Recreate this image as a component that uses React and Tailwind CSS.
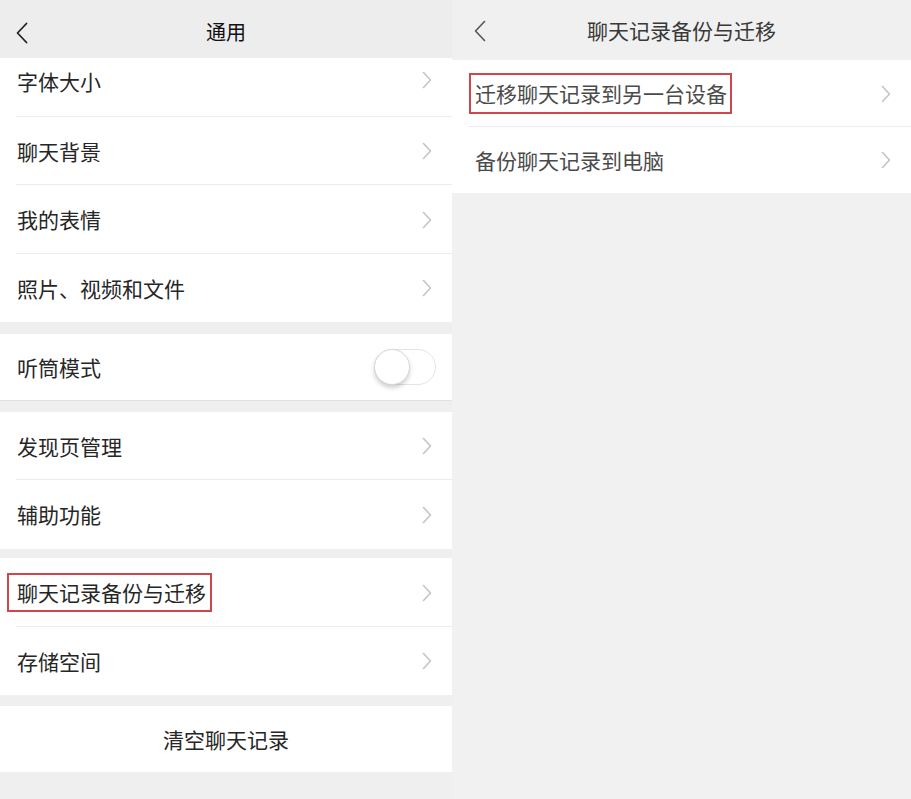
import React from "react";

const font = { fontFamily: '"Noto Sans CJK SC", "Noto Sans", sans-serif' };

function Chevron({ className = "" }) {
  return (
    <svg width="10" height="18" viewBox="0 0 10 18" className={className}>
      <path d="M1.5 1.5 L8.5 9 L1.5 16.5" fill="none" stroke="#c4c4c8" strokeWidth="1.6" strokeLinecap="round" strokeLinejoin="round" />
    </svg>
  );
}

function Back() {
  return (
    <svg width="14" height="22" viewBox="0 0 14 22">
      <path d="M11.5 1.5 L2.5 11 L11.5 20.5" fill="none" stroke="#222" strokeWidth="1.8" strokeLinecap="round" strokeLinejoin="round" />
    </svg>
  );
}

function Row({ children, h = "h-[68px]", divider = true, extra = "" }) {
  return (
    <div className={`relative flex ${h} items-center bg-white pl-[17px] pr-[20px] ${extra}`}>
      <div className="flex-1 text-[21px] leading-none text-[#262626]">{children}</div>
      <Chevron />
      {divider && <div className="absolute bottom-0 left-[16px] right-0 h-px bg-[#ececec]" />}
    </div>
  );
}

export default function App() {
  return (
    <div className="flex h-[799px] w-[911px] overflow-hidden" style={font}>
      {/* Left panel */}
      <div className="flex w-[452px] flex-col bg-[#efefef]">
        <div className="relative flex h-[58px] items-center justify-center bg-[#ededed] pt-[6px]">
          <div className="absolute left-[15px] top-[22px]"><Back /></div>
          <div className="text-[20px] leading-none text-[#111]">通用</div>
        </div>
        <Row h="h-[59px]" extra="items-start pt-[13px]">字体大小</Row>
        <Row>聊天背景</Row>
        <Row h="h-[69px]">我的表情</Row>
        <Row divider={false}>照片、视频和文件</Row>
        <div className="h-[12px]" />
        <div className="flex h-[67px] items-center bg-white pl-[17px] pr-[16px] border-b border-[#e2e2e2]">
          <div className="flex-1 text-[21px] leading-none text-[#262626]">听筒模式</div>
          <div className="relative h-[36px] w-[62px] rounded-full border border-[#e4e4e4] bg-white">
            <div className="absolute left-[-1px] top-[-1px] h-[36px] w-[36px] rounded-full border border-[#d8d8d8] bg-white shadow-[0_3px_4px_rgba(0,0,0,0.18)]" />
          </div>
        </div>
        <div className="h-[11px]" />
        <Row>发现页管理</Row>
        <Row h="h-[69px]" divider={false}>辅助功能</Row>
        <div className="h-[9px]" />
        <div className="relative flex h-[69px] items-center bg-white pl-[17px] pr-[20px]">
          <div className="flex-1">
            <span className="-ml-[10px] inline-block border-2 border-[#d0464a] py-[7px] pl-[8px] pr-[4px] text-[21px] leading-none text-[#262626]">
              聊天记录备份与迁移
            </span>
          </div>
          <Chevron />
          <div className="absolute bottom-0 left-[16px] right-0 h-px bg-[#ececec]" />
        </div>
        <Row divider={false}>存储空间</Row>
        <div className="h-[11px]" />
        <div className="flex h-[66px] items-center justify-center bg-white">
          <div className="text-[21px] leading-none text-[#262626]">清空聊天记录</div>
        </div>
        <div className="flex-1" />
      </div>

      {/* Right panel */}
      <div className="flex flex-1 flex-col bg-[#f1f1f1]">
        <div className="relative flex h-[60px] items-center justify-center bg-[#f0f0f0]">
          <div className="absolute left-[21px] top-[20px]">
            <svg width="14" height="22" viewBox="0 0 14 22">
              <path d="M11.5 1.5 L2.5 11 L11.5 20.5" fill="none" stroke="#555" strokeWidth="1.6" strokeLinecap="round" strokeLinejoin="round" />
            </svg>
          </div>
          <div className="text-[21px] leading-none text-[#383838]">聊天记录备份与迁移</div>
        </div>
        <div className="relative flex h-[67px] items-center bg-white pl-[23px] pr-[20px]">
          <div className="flex-1">
            <span className="-ml-[6px] inline-block border-2 border-[#d0464a] py-[8px] pl-[4px] pr-[3px] text-[21px] leading-none text-[#4a4a4a]">
              迁移聊天记录到另一台设备
            </span>
          </div>
          <Chevron />
          <div className="absolute bottom-0 left-[16px] right-0 h-px bg-[#ececec]" />
        </div>
        <div className="flex h-[66px] items-center bg-white pl-[23px] pr-[20px]">
          <div className="flex-1 text-[21px] leading-none text-[#4a4a4a]">备份聊天记录到电脑</div>
          <Chevron />
        </div>
        <div className="flex-1" />
      </div>
    </div>
  );
}
